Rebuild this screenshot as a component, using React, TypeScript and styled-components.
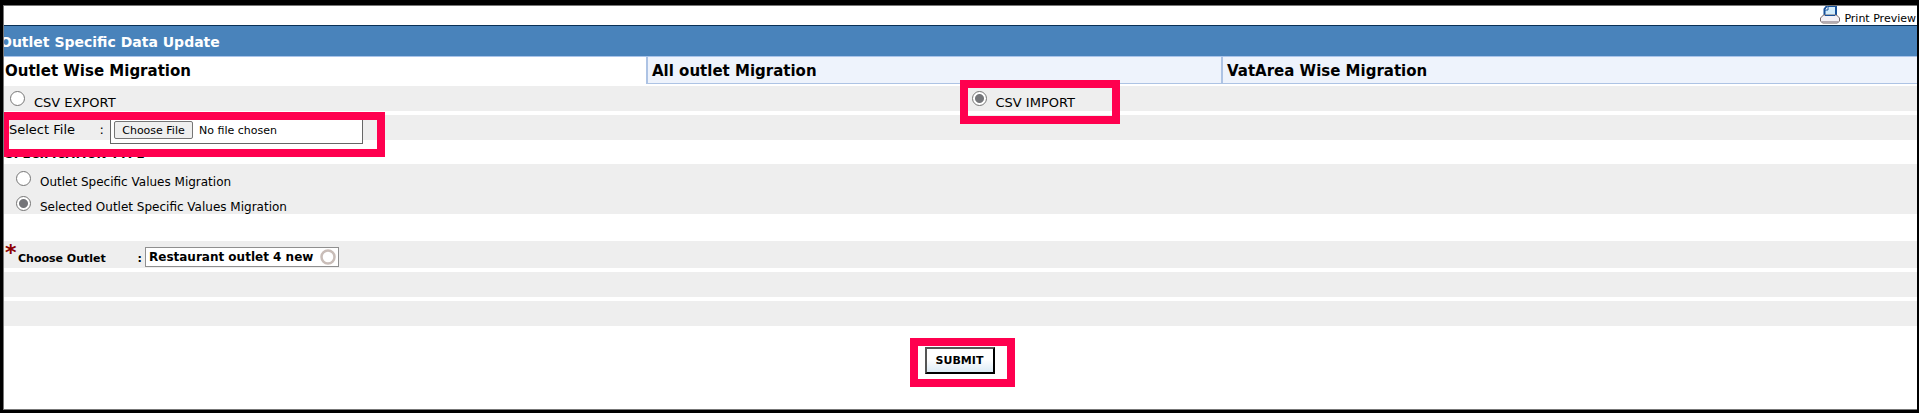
import React, { useState } from 'react';
import styled, { createGlobalStyle } from 'styled-components';

const GlobalStyle = createGlobalStyle`
  * { box-sizing: border-box; }
  html, body { margin: 0; background: #000; }
  body, button, input { font-family: Verdana, 'DejaVu Sans', sans-serif; color: #000; }
  body { font-size: 12px; }
`;

const Page = styled.main`
  min-height: 100vh;
  padding: 5px 2px 3px 3px;
  display: flex;
`;

const Panel = styled.form`
  flex: 1;
  min-width: 0;
  background: #fff;
  border: solid #777;
  border-width: 1px 0 1px 1px;
  overflow: hidden;
`;

const TopBar = styled.div`
  height: 19px;
  display: flex;
  justify-content: flex-end;
`;

const PrintLink = styled.a`
  display: flex;
  gap: 4px;
  margin-right: 1px;
  font-size: 11px;
  line-height: 26px;
  color: #000;
  text-decoration: none;
`;

const Title = styled.h1`
  margin: 0;
  height: 31px;
  line-height: 32px;
  font-size: 14px;
  color: #fff;
  background: #4983bb;
  border-top: 1px solid #0a3055;
  text-indent: -4px;
`;

const Tabs = styled.nav`
  display: grid;
  grid-template-columns: 642fr 575fr 696fr;
  height: 30px;
  border-top: 1px solid #a9c4ea;
`;

const Tab = styled.button<{ $active?: boolean }>`
  height: 27px;
  padding: 1px 0 0 ${p => (p.$active ? 1 : 4)}px;
  border: 0 solid #adc3e4;
  border-width: ${p => (p.$active ? '0' : '0 0 1px 2px')};
  background: ${p => (p.$active ? '#fff' : '#eef3fc')};
  font-size: 15px;
  font-weight: bold;
  text-align: left;
`;

const Row = styled.div<{ $h?: number; $gap?: number }>`
  display: flex;
  height: ${p => p.$h || 25}px;
  margin-bottom: ${p => (p.$gap === undefined ? 4 : p.$gap)}px;
  background: #eee;
`;

const Half = styled.div`
  flex: 1;
  display: flex;
`;

const Option = styled.label<{ $indent?: number; $size?: number }>`
  position: relative;
  display: flex;
  height: 25px;
  padding-left: ${p => p.$indent || 6}px;
  gap: 9px;
  font-size: ${p => p.$size || 13}px;
  line-height: 33px;
  white-space: nowrap;
`;

const Radio = styled.input`
  appearance: none;
  width: 15px;
  height: 15px;
  margin: 5px 0 0;
  border: 1px solid #767676;
  border-radius: 50%;
  background: #fff;
  &:checked { background: radial-gradient(circle, #75767a 4px, #fff 5px); }
`;

const Options = styled.fieldset`
  margin: 0 0 27px;
  padding: 2px 0 0 6px;
  border: 0;
  height: 50px;
  background: #eee;
`;

const Mark = styled.span<{ $box: string }>`
  position: absolute;
  z-index: 1;
  inset: ${p => p.$box};
  border: 8px solid #ff004f;
  pointer-events: none;
`;

const FileField = styled.div`
  position: relative;
  display: flex;
  margin-left: 5px;
`;

const FieldLabel = styled.label`
  display: flex;
  justify-content: space-between;
  width: 95px;
  font-size: 13px;
  line-height: 30px;
`;

const FileInput = styled.input`
  width: 253px;
  height: 29px;
  margin-left: 6px;
  padding: 5px 3px;
  border: 1px solid #666;
  background: #fff;
  font-size: 11px;
  &::file-selector-button {
    height: 18px;
    width: 79px;
    margin: 0 6px 0 0;
    padding: 0;
    border: 1px solid #767676;
    border-radius: 2px;
    background: #efefef;
    font: inherit;
  }
`;

const Heading = styled.h2`
  margin: 0;
  height: 20px;
  padding: 2px 0 0 1px;
  font-size: 12px;
  line-height: 16px;
`;

const OutletRow = styled(Row)`
  padding-left: 1px;
`;

const Required = styled.span`
  width: 13px;
  font-size: 22px;
  font-weight: bold;
  line-height: 24px;
  color: #8b0000;
`;

const OutletLabel = styled.label`
  display: flex;
  justify-content: space-between;
  width: 124px;
  font-size: 11px;
  font-weight: bold;
  line-height: 35px;
`;

const OutletBox = styled.span`
  display: flex;
  align-items: center;
  width: 194px;
  height: 20px;
  margin: 6px 0 0 3px;
  padding: 0 2px 0 3px;
  border: 1px solid #8f8f8f;
  background: #fff;
`;

const OutletInput = styled.input`
  flex: 1;
  min-width: 0;
  padding: 0;
  border: 0;
  background: none;
  font-size: 12px;
  font-weight: bold;
`;

const Actions = styled.div`
  display: flex;
  justify-content: center;
  padding: 21px 2px 28px 0;
`;

const SubmitWrap = styled.span`
  position: relative;
`;

const Submit = styled.button`
  display: block;
  width: 70px;
  height: 27px;
  padding: 0;
  border: 2px solid #000;
  border-top-color: #555;
  border-left-color: #555;
  background: linear-gradient(#fff 45%, #dcebf5);
  font-size: 11px;
  font-weight: bold;
`;

const Printer = () => (
  <svg width="20" height="18" viewBox="0 0 20 18" aria-hidden="true">
    <path d="M4.5 11V3L7 0H16v11z" fill="#d3ecfb" stroke="#17519b" strokeWidth="2" />
    <path d="M5 4h3V0" fill="#fff" stroke="#17519b" />
    <path d="M3.5 9h13l3 3v3l-2 2h-15l-2-2v-3z" fill="#f4f1f6" stroke="#77696b" />
    <path d="M5 9.5h10" stroke="#17519b" />
    <path d="M2 15.5h16" stroke="#b3aab2" />
  </svg>
);

export default function App() {
  const [mode, setMode] = useState('import');
  const [scope, setScope] = useState('selected');
  return (
    <Page>
      <GlobalStyle />
      <Panel onSubmit={e => e.preventDefault()}>
        <TopBar><PrintLink href="#print"><Printer />Print Preview</PrintLink></TopBar>
        <Title>Outlet Specific Data Update</Title>
        <Tabs>
          <Tab type="button" $active>Outlet Wise Migration</Tab>
          <Tab type="button">All outlet Migration</Tab>
          <Tab type="button">VatArea Wise Migration</Tab>
        </Tabs>
        <Row>
          <Half>
            <Option>
              <Radio type="radio" name="mode" checked={mode === 'export'} onChange={() => setMode('export')} />
              CSV EXPORT
            </Option>
          </Half>
          <Half>
            <Option $indent={11}>
              <Radio type="radio" name="mode" checked={mode === 'import'} onChange={() => setMode('import')} />
              CSV IMPORT
              <Mark $box="-6px -45px -13px -1px" />
            </Option>
          </Half>
        </Row>
        <Row>
          <FileField>
            <FieldLabel htmlFor="file"><span>Select File</span><span>:</span></FieldLabel>
            <FileInput id="file" type="file" />
            <Mark $box="-3px -22px -17px -8px" />
          </FileField>
        </Row>
        <Heading>SPECIFICATION TYPE</Heading>
        <Options>
          <Option $size={12}>
            <Radio type="radio" name="scope" checked={scope === 'all'} onChange={() => setScope('all')} />
            Outlet Specific Values Migration
          </Option>
          <Option $size={12}>
            <Radio type="radio" name="scope" checked={scope === 'selected'} onChange={() => setScope('selected')} />
            Selected Outlet Specific Values Migration
          </Option>
        </Options>
        <OutletRow $h={27}>
          <Required>*</Required>
          <OutletLabel htmlFor="outlet"><span>Choose Outlet</span><span>:</span></OutletLabel>
          <OutletBox>
            <OutletInput id="outlet" defaultValue="Restaurant outlet 4 new" />
            <svg width="16" height="16" viewBox="0 0 16 16" aria-hidden="true">
              <circle cx="8" cy="8" r="6.5" fill="none" stroke="#c9bdb8" strokeWidth="2.5" />
            </svg>
          </OutletBox>
        </OutletRow>
        <Row />
        <Row $gap={0} />
        <Actions>
          <SubmitWrap>
            <Submit type="submit">SUBMIT</Submit>
            <Mark $box="-9px -20px -13px -15px" />
          </SubmitWrap>
        </Actions>
      </Panel>
    </Page>
  );
}
